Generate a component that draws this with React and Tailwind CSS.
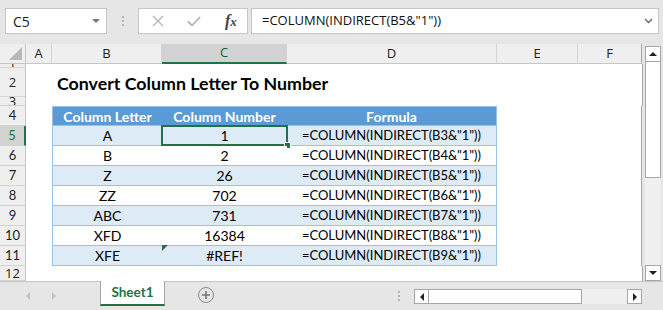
import React from 'react';

const cellFont = { fontFamily: 'Lato, "Open Sans", sans-serif' };

const cols = [
  { key: 'A', w: 'w-[26px]' },
  { key: 'B', w: 'w-[110px]' },
  { key: 'C', w: 'w-[125px]' },
  { key: 'D', w: 'w-[210px]' },
  { key: 'E', w: 'w-[81px]' },
  { key: 'F', w: 'w-[64px]' },
];

const data = [
  ['A', '1', 'B3'],
  ['B', '2', 'B4'],
  ['Z', '26', 'B5'],
  ['ZZ', '702', 'B6'],
  ['ABC', '731', 'B7'],
  ['XFD', '16384', 'B8'],
  ['XFE', '#REF!', 'B9'],
];

const rowHeights = { 1: 'h-[4px]', 2: 'h-[29px]', 3: 'h-[9px]', 12: 'h-[15px]' };

const RowHead = ({ n, active }) => (
  <div
    className={`w-[26px] shrink-0 flex items-center justify-center overflow-hidden text-[13px] leading-none border-b border-[#d4d4d4] ${
      active ? 'bg-[#d2d2d2] border-r-2 border-r-[#217346] text-[#217346]' : 'bg-[#efefef] border-r border-r-[#c6c6c6] text-[#222]'
    }`}
  >
    {n}
  </div>
);

const ColumnHeader = () => (
  <div className="flex h-[20px]">
    <div className="w-[26px] shrink-0 bg-[#efefef] border-r border-b border-[#c6c6c6] relative">
      <div className="absolute right-[3px] bottom-[3px] w-0 h-0 border-l-[13px] border-l-transparent border-b-[13px] border-b-[#b8b8b8]" />
    </div>
    {cols.map((c) => (
      <div
        key={c.key}
        className={`${c.w} shrink-0 flex items-center justify-center text-[13px] border-r border-[#d4d4d4] ${
          c.key === 'C'
            ? 'bg-[#d2d2d2] border-b-2 border-b-[#217346] text-[#1d5b3a]'
            : 'bg-[#efefef] border-b border-b-[#c6c6c6] text-[#222]'
        } ${c.key === 'F' ? 'border-r-[#a6a6a6]' : ''}`}
      >
        {c.key}
      </div>
    ))}
  </div>
);

const PlainRow = ({ n, children }) => (
  <div className={`flex ${rowHeights[n]}`}>
    <RowHead n={n} />
    <div className="flex-1 bg-white border-r border-[#a6a6a6] relative">{children}</div>
  </div>
);

const TableRow = ({ n, cells, header, band, active, errFlag }) => {
  const base = header
    ? 'bg-[#5b9bd5] text-white font-bold'
    : band
    ? 'bg-[#ddebf7] text-black'
    : 'bg-white text-black';
  const edge = `border-b border-[#9bc2e6] ${header ? 'border-t' : ''}`;
  return (
    <div className="flex h-[20px]" style={cellFont}>
      <RowHead n={n} active={active} />
      <div className="w-[26px] shrink-0 bg-white" />
      <div className={`w-[110px] shrink-0 flex items-center justify-center text-[14px] border-l ${edge} ${base}`}>
        {cells[0]}
      </div>
      <div className={`w-[125px] shrink-0 flex items-center justify-center text-[14px] relative ${edge} ${base}`}>
        {cells[1]}
        {active && (
          <div className="absolute -left-[1px] -top-[1px] -right-[1px] -bottom-[1px] border-2 border-[#217346]">
            <div className="absolute -right-[5px] -bottom-[5px] w-[7px] h-[7px] bg-[#217346] border border-white" />
          </div>
        )}
        {errFlag && (
          <div className="absolute left-0 -top-[1px] w-0 h-0 border-t-[6px] border-t-[#217346] border-r-[6px] border-r-transparent" />
        )}
      </div>
      <div
        className={`w-[210px] shrink-0 flex items-center justify-center border-r ${edge} ${base} ${
          header ? 'text-[14px]' : 'text-[13px]'
        }`}
      >
        {cells[2]}
      </div>
      <div className="w-[81px] shrink-0 bg-white" />
      <div className="w-[64px] shrink-0 bg-white border-r border-[#a6a6a6]" />
    </div>
  );
};

const Tri = ({ dir, className = '' }) => {
  const shapes = {
    up: 'border-l-[4px] border-r-[4px] border-b-[4px] border-l-transparent border-r-transparent border-b-[#222]',
    down: 'border-l-[4px] border-r-[4px] border-t-[4px] border-l-transparent border-r-transparent border-t-[#222]',
    left: 'border-t-[4px] border-b-[4px] border-r-[4px] border-t-transparent border-b-transparent border-r-[#222]',
    right: 'border-t-[4px] border-b-[4px] border-l-[4px] border-t-transparent border-b-transparent border-l-[#222]',
  };
  return <div className={`w-0 h-0 ${shapes[dir]} ${className}`} />;
};

const Dots = () => (
  <div className="flex flex-col gap-[2px]">
    <div className="w-[2px] h-[2px] bg-[#b4b4b4]" />
    <div className="w-[2px] h-[2px] bg-[#b4b4b4]" />
    <div className="w-[2px] h-[2px] bg-[#b4b4b4]" />
  </div>
);

export default function App() {
  return (
    <div
      className="w-[663px] h-[310px] bg-[#e6e6e6] overflow-hidden flex flex-col"
      style={{ fontFamily: '"Open Sans", "Noto Sans", sans-serif' }}
    >
      {/* formula bar */}
      <div className="h-[44px] shrink-0 flex items-start pt-[8px] pl-[5px]">
        <div className="w-[102px] h-[26px] bg-white border border-[#c6c6c6] flex items-center justify-between pl-[7px] pr-[6px] text-[14px] text-[#222]">
          <span>C5</span>
          <Tri dir="down" className="border-t-[#777]" />
        </div>
        <div className="w-[31px] h-[26px] flex items-center justify-center">
          <Dots />
        </div>
        <div className="w-[110px] h-[26px] bg-white border border-[#c6c6c6] flex items-center text-[#b8b8b8]">
          <svg className="ml-[13px]" width="12" height="12" viewBox="0 0 12 12">
            <path d="M1 1 L11 11 M11 1 L1 11" stroke="#b4b4b4" strokeWidth="1.4" />
          </svg>
          <svg className="ml-[23px]" width="14" height="11" viewBox="0 0 14 11">
            <path d="M1 5.5 L5 9.5 L13 1" stroke="#b4b4b4" strokeWidth="1.8" fill="none" />
          </svg>
          <span
            className="ml-[24px] text-[16px] italic font-bold text-[#444]"
            style={{ fontFamily: '"Liberation Serif", serif' }}
          >
            f<span className="text-[13px]">x</span>
          </span>
        </div>
        <div className="w-[408px] h-[26px] ml-[3px] bg-white border border-[#c6c6c6] flex items-center justify-between pl-[10px] pr-[5px] text-[13px] text-[#111]">
          <span>=COLUMN(INDIRECT(B5&amp;"1"))</span>
          <svg width="9" height="6" viewBox="0 0 9 6">
            <path d="M1 1 L4.5 4.5 L8 1" stroke="#666" strokeWidth="1.4" fill="none" />
          </svg>
        </div>
      </div>

      {/* sheet */}
      <div className="flex flex-1 min-h-0">
        <div className="w-[643px] shrink-0 flex flex-col">
          <ColumnHeader />
          <PlainRow n={1} />
          <PlainRow n={2}>
            <div
              className="absolute left-[31px] bottom-[4px] text-[17.8px] font-bold text-black leading-none whitespace-nowrap"
              style={cellFont}
            >
              Convert Column Letter To Number
            </div>
          </PlainRow>
          <PlainRow n={3} />
          <TableRow n={4} header cells={['Column Letter', 'Column Number', 'Formula']} />
          {data.map((d, i) => (
            <TableRow
              key={i}
              n={i + 5}
              band={i % 2 === 0}
              active={i === 0}
              errFlag={i === 6}
              cells={[d[0], d[1], `=COLUMN(INDIRECT(${d[2]}&"1"))`]}
            />
          ))}
          <PlainRow n={12} />
        </div>
        {/* vertical scrollbar */}
        <div className="flex-1 bg-[#e6e6e6] flex flex-col items-center pt-[2px]">
          <div className="w-[16px] h-[16px] bg-white border border-[#a6a6a6] flex items-center justify-center">
            <Tri dir="up" />
          </div>
          <div className="w-[16px] flex-1 bg-[#f0f0f0] flex flex-col">
            <div className="h-[116px] bg-white border border-t-0 border-[#a6a6a6]" />
          </div>
          <div className="w-[16px] h-[16px] bg-white border border-[#a6a6a6] flex items-center justify-center">
            <Tri dir="down" />
          </div>
        </div>
      </div>

      {/* tab bar */}
      <div className="h-[29px] shrink-0 border-t border-[#c6c6c6] flex items-start relative">
        <div className="w-[100px] h-[27px] flex items-center pl-[26px] gap-[22px]">
          <Tri dir="left" className="border-r-[#c0c0c0]" />
          <Tri dir="right" className="border-l-[#c0c0c0]" />
        </div>
        <div
          className="w-[65px] h-[25px] -mt-[1px] bg-white border-x border-[#a6a6a6] border-b-2 border-b-[#217346] flex items-center justify-center text-[13.5px] font-bold text-[#217346]"
          style={cellFont}
        >
          Sheet1
        </div>
        <div className="ml-[33px] mt-[5px] w-[16px] h-[16px] rounded-full border-[1.5px] border-[#8a8a8a] flex items-center justify-center">
          <svg width="8" height="8" viewBox="0 0 8 8">
            <path d="M4 0 V8 M0 4 H8" stroke="#777" strokeWidth="1.6" />
          </svg>
        </div>
        <div className="ml-[184px] mt-[9px]">
          <Dots />
        </div>
        <div className="ml-[14px] mt-[7px] w-[228px] h-[15px] flex bg-[#f0f0f0]">
          <div className="w-[15px] h-[15px] bg-white border border-[#a6a6a6] flex items-center justify-center">
            <Tri dir="left" />
          </div>
          <div className="w-[153px] h-[15px] bg-white border-y border-r border-[#a6a6a6]" />
          <div className="flex-1" />
          <div className="w-[15px] h-[15px] bg-white border border-[#a6a6a6] flex items-center justify-center">
            <Tri dir="right" />
          </div>
        </div>
      </div>
    </div>
  );
}
